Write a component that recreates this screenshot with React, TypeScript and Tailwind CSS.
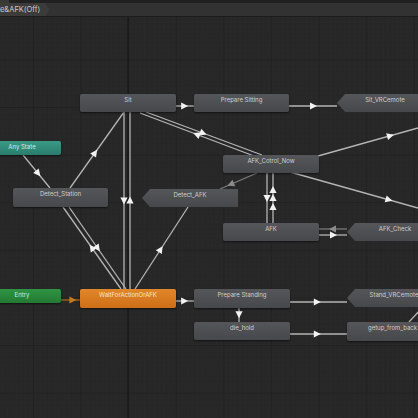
import React from "react"

type Kind = "gray" | "chev" | "orange" | "teal" | "green"

type StateNode = { label: string; x: number; y: number; w: number; h: number; kind: Kind }

type Edge = { x1: number; y1: number; x2: number; y2: number; at: number[]; color?: string; head?: string }

const nodes: StateNode[] = [
  { label: "Sit", x: 80, y: 94, w: 96, h: 18, kind: "gray" },
  { label: "Prepare Sitting", x: 194, y: 94, w: 95, h: 18, kind: "gray" },
  { label: "Sit_VRCemote", x: 337, y: 94, w: 96, h: 18, kind: "chev" },
  { label: "Any State", x: -17, y: 141, w: 78, h: 14, kind: "teal" },
  { label: "Detect_Station", x: 13, y: 188, w: 95, h: 19, kind: "gray" },
  { label: "Detect_AFK", x: 142, y: 189, w: 96, h: 18, kind: "chev" },
  { label: "AFK_Cotrol_Now", x: 223, y: 155, w: 96, h: 18, kind: "gray" },
  { label: "AFK", x: 223, y: 223, w: 96, h: 18, kind: "gray" },
  { label: "AFK_Check", x: 347, y: 223, w: 96, h: 18, kind: "chev" },
  { label: "Entry", x: -17, y: 289, w: 78, h: 14, kind: "green" },
  { label: "WaitForActionOrAFK", x: 80, y: 289, w: 96, h: 19, kind: "orange" },
  { label: "Prepare Standing", x: 194, y: 289, w: 96, h: 19, kind: "gray" },
  { label: "Stand_VRCemote", x: 347, y: 289, w: 94, h: 18, kind: "chev" },
  { label: "die_hold", x: 194, y: 322, w: 96, h: 18, kind: "gray" },
  { label: "getup_from_back", x: 347, y: 322, w: 91, h: 19, kind: "gray" },
]

const edges: Edge[] = [
  { x1: 176, y1: 106, x2: 194, y2: 106, at: [0.45] },
  { x1: 289, y1: 106, x2: 337, y2: 106, at: [0.5] },
  { x1: 146, y1: 112, x2: 262, y2: 155, at: [0.49] },
  { x1: 254, y1: 156, x2: 140, y2: 113, at: [0.5] },
  { x1: 124, y1: 112, x2: 124, y2: 289, at: [0.5] },
  { x1: 130, y1: 289, x2: 130, y2: 112, at: [0.5] },
  { x1: 70, y1: 188, x2: 124, y2: 112, at: [0.46] },
  { x1: 23, y1: 155, x2: 50, y2: 188, at: [0.55] },
  { x1: 69, y1: 207, x2: 126, y2: 289, at: [0.5] },
  { x1: 121, y1: 289, x2: 63, y2: 207, at: [0.5] },
  { x1: 135, y1: 289, x2: 188, y2: 207, at: [0.48] },
  { x1: 257, y1: 173, x2: 220, y2: 189, at: [0.7], color: "#7a7a7a", head: "#8c8c8c" },
  { x1: 267, y1: 173, x2: 267, y2: 223, at: [0.5] },
  { x1: 273, y1: 223, x2: 273, y2: 173, at: [0.32, 0.5, 0.66] },
  { x1: 318, y1: 156, x2: 418, y2: 128, at: [0.72] },
  { x1: 290, y1: 172, x2: 418, y2: 208, at: [0.77] },
  { x1: 347, y1: 229, x2: 319, y2: 229, at: [0.5], color: "#7a7a7a", head: "#8c8c8c" },
  { x1: 319, y1: 235, x2: 347, y2: 235, at: [0.5] },
  { x1: 61, y1: 300, x2: 80, y2: 300, at: [0.6], color: "#a8681a", head: "#c07a1e" },
  { x1: 176, y1: 301, x2: 194, y2: 301, at: [0.45] },
  { x1: 290, y1: 302, x2: 347, y2: 302, at: [0.47] },
  { x1: 239, y1: 308, x2: 239, y2: 322, at: [0.45] },
  { x1: 290, y1: 334, x2: 347, y2: 334, at: [0.47] },
  { x1: 409, y1: 322, x2: 422, y2: 308, at: [] },
]

function arrowPoints(e: Edge, t: number) {
  const dx = e.x2 - e.x1
  const dy = e.y2 - e.y1
  const len = Math.hypot(dx, dy)
  const ux = dx / len
  const uy = dy / len
  const nx = -uy
  const ny = ux
  const cx = e.x1 + dx * t
  const cy = e.y1 + dy * t
  const tip = [cx + ux * 4, cy + uy * 4]
  const b1 = [cx - ux * 3 + nx * 3.6, cy - uy * 3 + ny * 3.6]
  const b2 = [cx - ux * 3 - nx * 3.6, cy - uy * 3 - ny * 3.6]
  return [tip, b1, b2].map((p) => p.join(",")).join(" ")
}

const nodeClass: Record<Kind, string> = {
  gray: "rounded-[2px] bg-gradient-to-b from-[#545659] to-[#47484b] text-[#cfcfcf]",
  chev: "bg-gradient-to-b from-[#545659] to-[#47484b] text-[#cfcfcf] [clip-path:polygon(8px_0,100%_0,100%_100%,8px_100%,0_50%)]",
  orange: "rounded-[2px] bg-gradient-to-b from-[#e2862a] to-[#cc6f17] text-[#f6e6d2]",
  teal: "rounded-[2px] bg-gradient-to-b from-[#3b9a87] to-[#2a7c6c] text-[#d6ebe4]",
  green: "rounded-[2px] bg-gradient-to-b from-[#2f9443] to-[#237a33] text-[#d6ead8]",
}

function GraphCanvas() {
  return (
    <svg className="absolute inset-0" width={418} height={418}>
      <defs>
        <pattern id="minor" width="4.76" height="4.76" x="33" y="11.8" patternUnits="userSpaceOnUse">
          <path d="M4.76 0H0V4.76" fill="none" stroke="#232323" strokeWidth="0.7" />
        </pattern>
        <pattern id="major" width="47.6" height="47.6" x="33" y="11.8" patternUnits="userSpaceOnUse">
          <rect width="47.6" height="47.6" fill="url(#minor)" />
          <path d="M47.6 0H0V47.6" fill="none" stroke="#1c1c1c" strokeWidth="1" />
        </pattern>
      </defs>
      <rect width="418" height="418" fill="#282828" />
      <rect width="418" height="418" fill="url(#major)" />
      <line x1="128" y1="0" x2="128" y2="418" stroke="#161616" strokeWidth="1.1" />

      {edges.map((e, i) => (
        <g key={i}>
          <line x1={e.x1} y1={e.y1} x2={e.x2} y2={e.y2} stroke={e.color ?? "#b4b4b4"} strokeWidth="1.3" />
          {e.at.map((t, j) => (
            <polygon key={j} points={arrowPoints(e, t)} fill={e.head ?? "#f2f2f2"} />
          ))}
        </g>
      ))}
    </svg>
  )
}

export default function App() {
  return (
    <div className="relative w-[418px] h-[418px] overflow-hidden bg-[#282828] font-['Inter','Liberation_Sans',sans-serif]">
      <GraphCanvas />

      {nodes.map((n) => (
        <div
          key={n.label}
          className={`absolute shadow-[0_1px_2px_rgba(0,0,0,0.55)] text-center text-[6px] leading-[8px] pt-[2px] whitespace-nowrap ${nodeClass[n.kind]}`}
          style={{ left: n.x, top: n.y, width: n.w, height: n.h }}
        >
          {n.label}
        </div>
      ))}

      {/* Breadcrumb bar */}
      <div className="relative z-10 flex flex-col">
        <div className="h-[3px] bg-[#202020] flex">
          <div className="w-[9px] bg-[#383838]" />
        </div>
        <div className="h-[14px] bg-[#323232] border-b border-[#1c1c1c] flex items-center">
          <div className="h-full flex items-center bg-[#3b3b3b] pr-[4px] [clip-path:polygon(0_0,calc(100%-4px)_0,100%_50%,calc(100%-4px)_100%,0_100%)]">
            <span className="text-[7.5px] leading-none text-[#cdcdcd] pr-[5px]">e&amp;AFK(Off)</span>
          </div>
        </div>
      </div>
    </div>
  )
}
